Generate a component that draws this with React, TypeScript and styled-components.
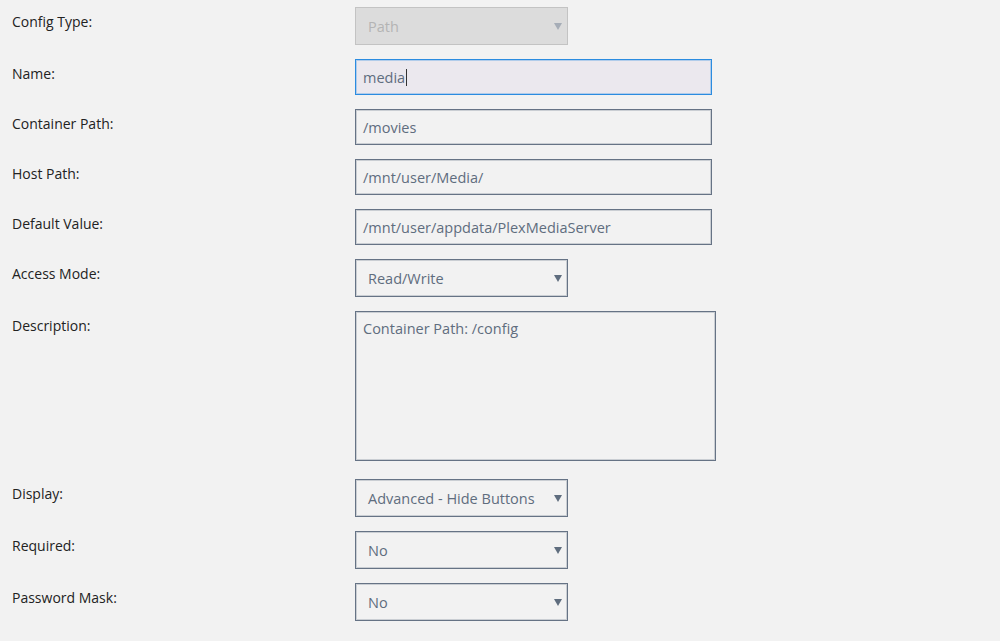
import React from 'react';
import styled, { createGlobalStyle } from 'styled-components';

const GlobalStyle = createGlobalStyle`
    html, body { margin: 0; padding: 0; background: #f2f2f2; }
    body { font-family: "Open Sans", "Noto Sans", sans-serif; }
`;

const Form = styled.div`
    display: flex;
    flex-direction: column;
    padding: 7px 0 0 12px;
`;

const Row = styled.div<{ $gap?: number }>`
    display: flex;
    align-items: flex-start;
    margin-bottom: ${p => p.$gap ?? 14}px;
`;

const Label = styled.div`
    width: 343px;
    flex-shrink: 0;
    padding-top: 4.5px;
    font-size: 14px;
    line-height: 20px;
    color: #222;
`;

const field = `
    box-sizing: border-box;
    border: 1px solid #667385;
    box-shadow: inset 0 0 0 1px rgba(102, 115, 133, 0.28);
    background: #f2f2f2;
    color: #5f6d7e;
    font-family: "Open Sans", "Noto Sans", sans-serif;
    font-size: 14.5px;
`;

const TextInput = styled.div<{ $focused?: boolean }>`
    ${field}
    width: 357px;
    height: 36px;
    padding: 0 7px;
    display: flex;
    align-items: center;
    ${p => p.$focused && `
        border-color: #2b8ce0;
        box-shadow: inset 0 0 0 1px rgba(43, 140, 224, 0.3);
        background: #ebe8ee;
    `}
`;

const Caret = styled.span`
    display: inline-block;
    width: 1px;
    height: 17px;
    margin-left: 1px;
    background: #333;
`;

const Select = styled.div<{ $disabled?: boolean }>`
    ${field}
    width: 213px;
    height: 38px;
    padding: 0 12px;
    display: flex;
    align-items: center;
    justify-content: space-between;
    ${p => p.$disabled && `
        border-color: #c3c3c3;
        box-shadow: none;
        background: #dcdcdc;
        color: #b4b4b4;
    `}
`;

const Arrow = styled.span<{ $disabled?: boolean }>`
    width: 0;
    height: 0;
    margin-right: -7px;
    border-left: 4px solid transparent;
    border-right: 4px solid transparent;
    border-top: 7px solid ${p => (p.$disabled ? '#a6adb7' : '#5f6d7e')};
`;

const TextArea = styled.div`
    ${field}
    width: 361px;
    height: 150px;
    padding: 7px 7px;
    line-height: 20px;
`;

const SelectField: React.FC<{ value: string; disabled?: boolean }> = ({ value, disabled }) => (
    <Select $disabled={disabled}>
        <span>{value}</span>
        <Arrow $disabled={disabled} />
    </Select>
);

export default function App() {
    return (
        <>
            <GlobalStyle />
            <Form>
                <Row>
                    <Label>Config Type:</Label>
                    <SelectField value="Path" disabled />
                </Row>
                <Row>
                    <Label>Name:</Label>
                    <TextInput $focused>media<Caret /></TextInput>
                </Row>
                <Row>
                    <Label>Container Path:</Label>
                    <TextInput>/movies</TextInput>
                </Row>
                <Row>
                    <Label>Host Path:</Label>
                    <TextInput>/mnt/user/Media/</TextInput>
                </Row>
                <Row>
                    <Label>Default Value:</Label>
                    <TextInput>/mnt/user/appdata/PlexMediaServer</TextInput>
                </Row>
                <Row>
                    <Label>Access Mode:</Label>
                    <SelectField value="Read/Write" />
                </Row>
                <Row $gap={18}>
                    <Label>Description:</Label>
                    <TextArea>Container Path: /config</TextArea>
                </Row>
                <Row>
                    <Label>Display:</Label>
                    <SelectField value="Advanced - Hide Buttons" />
                </Row>
                <Row>
                    <Label>Required:</Label>
                    <SelectField value="No" />
                </Row>
                <Row>
                    <Label>Password Mask:</Label>
                    <SelectField value="No" />
                </Row>
            </Form>
        </>
    );
}
